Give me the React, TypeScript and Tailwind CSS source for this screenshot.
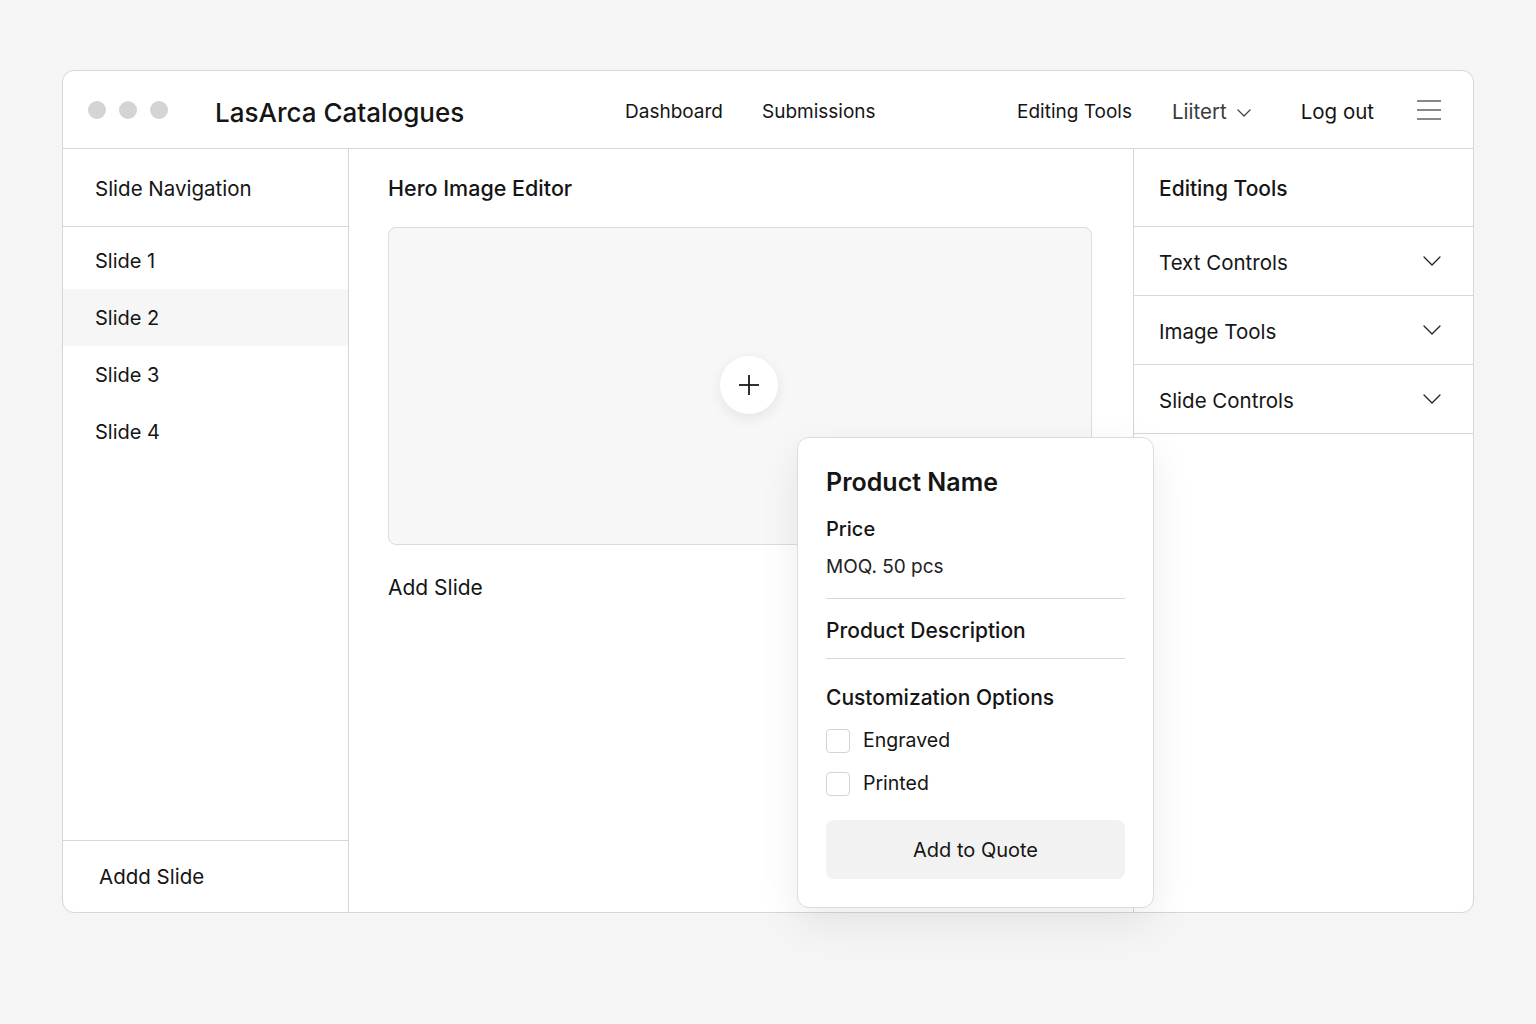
import React from 'react';

const FONT = { fontFamily: 'Inter, "Noto Sans", sans-serif' };

function Chevron({ className = '' }: { className?: string }) {
  return (
    <svg className={className} width="18" height="10" viewBox="0 0 18 10" fill="none">
      <polyline points="1,1 9,9 17,1" stroke="#222" strokeWidth="1.3" strokeLinecap="round" strokeLinejoin="round" />
    </svg>
  );
}

const SLIDES = ['Slide 1', 'Slide 2', 'Slide 3', 'Slide 4'];
const TOOLS = ['Text Controls', 'Image Tools', 'Slide Controls'];

export default function App() {
  return (
    <div className="min-h-screen w-full bg-[#f5f5f5] pt-[70px] pl-[62px] text-[#151515]" style={FONT}>
      <div className="relative w-[1412px] h-[843px] bg-white border border-[#d6d6d6] rounded-[12px] flex flex-col">
        {/* header */}
        <header className="h-[78px] shrink-0 flex items-center border-b border-[#d6d6d6] pl-[25px] pr-[32px]">
          <div className="flex items-center gap-[13px]">
            <span className="w-[18px] h-[18px] rounded-full bg-[#d4d4d4]" />
            <span className="w-[18px] h-[18px] rounded-full bg-[#d4d4d4]" />
            <span className="w-[18px] h-[18px] rounded-full bg-[#d4d4d4]" />
          </div>
          <div className="ml-[47px] w-[410px] text-[26px] font-medium mt-[6px]">LasArca Catalogues</div>
          <nav className="flex items-center gap-[39px] text-[19px] mt-[6px]">
            <span>Dashboard</span>
            <span>Submissions</span>
          </nav>
          <div className="flex-1" />
          <div className="flex items-center text-[19px] mt-[6px]">
            <span>Editing Tools</span>
            <span className="ml-[40px] flex items-center gap-[10px] text-[20.5px] text-[#3a3a3a]">
              Liitert
              <svg width="14" height="8" viewBox="0 0 14 8" fill="none">
                <polyline points="1,1 7,7 13,1" stroke="#444" strokeWidth="1.3" strokeLinecap="round" strokeLinejoin="round" />
              </svg>
            </span>
            <span className="ml-[50px] text-[20.5px]">Log out</span>
            <svg className="ml-[43px] -mt-[6px]" width="24" height="20" viewBox="0 0 24 20" fill="none">
              <line x1="0" y1="1" x2="24" y2="1" stroke="#555" strokeWidth="1.4" />
              <line x1="0" y1="10" x2="24" y2="10" stroke="#555" strokeWidth="1.4" />
              <line x1="0" y1="19" x2="24" y2="19" stroke="#555" strokeWidth="1.4" />
            </svg>
          </div>
        </header>

        {/* body */}
        <div className="flex flex-1 min-h-0">
          <aside className="w-[286px] shrink-0 border-r border-[#d6d6d6] flex flex-col">
            <div className="h-[78px] shrink-0 flex items-center pl-[32px] pt-[3px] border-b border-[#d6d6d6] text-[20.5px]">Slide Navigation</div>
            <div className="pt-[5px] flex-1">
              {SLIDES.map((s, i) => (
                <div key={s} className={`h-[57px] flex items-center pl-[32px] text-[20px] ${i === 1 ? 'bg-[#f6f6f6]' : ''}`}>{s}</div>
              ))}
            </div>
            <div className="h-[72px] shrink-0 border-t border-[#d6d6d6] flex items-center pl-[36px] pt-[2px] text-[20.5px]">Addd Slide</div>
          </aside>

          <main className="flex-1 pl-[39px] pr-[41px]">
            <div className="h-[78px] flex items-center text-[21.5px] font-medium">Hero Image Editor</div>
            <div className="h-[318px] rounded-[8px] border border-[#dcdcdc] bg-[#f7f7f7] flex items-center justify-center">
              <div className="ml-[17px] -mt-[2px] w-[58px] h-[58px] rounded-full bg-white shadow-[0_4px_14px_rgba(0,0,0,0.08)] flex items-center justify-center">
                <svg width="22" height="22" viewBox="0 0 22 22" fill="none">
                  <line x1="11" y1="1" x2="11" y2="21" stroke="#1a1a1a" strokeWidth="1.8" />
                  <line x1="1" y1="11" x2="21" y2="11" stroke="#1a1a1a" strokeWidth="1.8" />
                </svg>
              </div>
            </div>
            <div className="mt-[27px] text-[21px]">Add Slide</div>
          </main>

          <aside className="w-[340px] shrink-0 border-l border-[#d6d6d6]">
            <div className="h-[78px] flex items-center pl-[25px] pt-[2px] border-b border-[#d6d6d6] text-[21px] font-medium">Editing Tools</div>
            {TOOLS.map((t) => (
              <div key={t} className="h-[69px] flex items-center justify-between pl-[25px] pr-[32px] pt-[4px] border-b border-[#d6d6d6] text-[20.5px]">
                <span>{t}</span>
                <Chevron className="-mt-[4px]" />
              </div>
            ))}
          </aside>
        </div>

        {/* product popover */}
        <div className="absolute left-[734px] top-[366px] w-[357px] h-[471px] bg-white border border-[#dcdcdc] rounded-[12px] shadow-[0_14px_40px_rgba(0,0,0,0.08)] px-[28px] pt-[28px]">
          <div className="text-[25px] font-semibold leading-[32px]">Product Name</div>
          <div className="mt-[17px] text-[20px] font-medium leading-[28px]">Price</div>
          <div className="mt-[12px] text-[19px] leading-[24px] text-[#222]">MOQ. 50 pcs</div>
          <div className="mt-[19px] border-t border-[#d8d8d8]" />
          <div className="mt-[18px] text-[21px] font-medium leading-[28px]">Product Description</div>
          <div className="mt-[13px] border-t border-[#d8d8d8]" />
          <div className="mt-[25px] text-[21px] font-medium leading-[28px]">Customization Options</div>
          <div className="mt-[16px] flex items-center gap-[13px] h-[26px]">
            <span className="w-[24px] h-[24px] rounded-[4px] border border-[#d4d4d4]" />
            <span className="text-[19.5px]">Engraved</span>
          </div>
          <div className="mt-[17px] flex items-center gap-[13px] h-[26px]">
            <span className="w-[24px] h-[24px] rounded-[4px] border border-[#d4d4d4]" />
            <span className="text-[19.5px]">Printed</span>
          </div>
          <div className="mt-[23px] h-[59px] rounded-[8px] bg-[#f2f2f2] flex items-center justify-center text-[20px]">Add to Quote</div>
        </div>
      </div>
    </div>
  );
}
